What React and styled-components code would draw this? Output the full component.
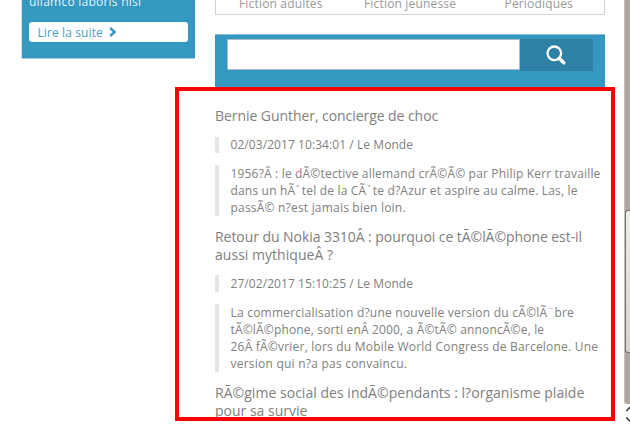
import React from "react";
import styled, { createGlobalStyle } from "styled-components";

const GlobalStyle = createGlobalStyle`
  * { box-sizing: border-box; }
  body { margin: 0; background: #fff; overflow: hidden; }
`;

const Page = styled.div`
  position: relative;
  display: flex;
  width: 630px;
  height: 429px;
  overflow: hidden;
  background: #fff;
  font-family: "Open Sans", sans-serif;
  color: #808080;
`;

const Sidebar = styled.aside`
  width: 173px;
  height: 59px;
  margin-left: 22px;
  padding: 0 7px;
  background: #3598c1;
  border-bottom: 1px solid #a5d0e3;
  box-shadow: -1px 0 0 #cfe5ef;
  flex: none;
`;

const Teaser = styled.p`
  margin: -7px 0 11px;
  height: 18px;
  line-height: 18px;
  font-size: 12px;
  letter-spacing: 0.24px;
  color: #e4f3fa;
  white-space: nowrap;
`;

const ReadMore = styled.a`
  display: flex;
  align-items: center;
  gap: 6px;
  width: 159px;
  height: 20px;
  padding-left: 8.4px;
  border-radius: 3px;
  background: #fff;
  color: #4a9fc6;
  font-size: 12px;
  letter-spacing: 0.12px;
  white-space: nowrap;
`;

const Main = styled.main`
  width: 390px;
  margin-left: 20px;
  flex: none;
`;

const Tabs = styled.nav`
  display: flex;
  height: 15px;
  padding-left: 23px;
  border: 1px solid #d2d2d2;
  border-top: 0;
`;

const Tab = styled.span`
  width: ${(p) => p.$w}px;
  flex: none;
  margin-top: -5px;
  line-height: 17px;
  font-size: 12px;
  letter-spacing: 0.17px;
  color: #999;
  white-space: nowrap;
`;

const Search = styled.form`
  display: flex;
  align-items: flex-start;
  height: 54px;
  margin: 19px 0 0;
  padding: 4px 12px 0;
  background: #3598c1;
  border-top: 1px solid #86c0da;
`;

const SearchInput = styled.input`
  width: 293px;
  height: 31px;
  margin: 0;
  padding: 0 8px;
  border: 1px solid #a9bcc5;
  border-radius: 0;
  background: #fff;
  outline: 0;
`;

const SearchButton = styled.button`
  display: flex;
  align-items: center;
  justify-content: center;
  width: 73px;
  height: 32px;
  margin: 0 0 0 -0.5px;
  padding: 0 1px 0 0;
  border: 0;
  background: #2d81a5;
`;

const News = styled.section`
  padding-top: 19px;
`;

const Title = styled.h3`
  margin: 0;
  font-weight: 400;
  font-size: 14px;
  line-height: ${(p) => p.$leading || 18.5}px;
`;

const Quote = styled.blockquote`
  display: flow-root;
  margin: ${(p) => p.$top}px 0 ${(p) => p.$bottom}px;
  padding: 0.9px 0 0 11.5px;
  border-left: 4px solid #e5e5e5;
  font-size: 12px;
  line-height: 16.9px;

  > :last-child {
    margin-bottom: -0.9px;
  }
`;

const Line = styled.span`
  display: block;
  width: max-content;
  white-space: pre;
  letter-spacing: ${(p) => p.$track || 0}px;
`;

const Accent = styled.span`
  margin: 0 2px 0 1px;
`;

const Highlight = styled.div`
  position: absolute;
  left: 175px;
  top: 87px;
  width: 440px;
  height: 334px;
  border: 4px solid #fe0000;
  pointer-events: none;
`;

const ScrollBar = styled.div`
  display: flex;
  flex-direction: column;
  width: 6px;
  margin-left: auto;
  flex: none;
`;

const Track = styled.div`
  height: 404px;
  padding-top: 210px;
  background: #aea5a0;
  border-left: 1px solid #c4beba;
  border-radius: 0 0 0 3px;
`;

const Thumb = styled.div`
  height: 143px;
  border: 1px solid #77716d;
  border-right: 0;
  border-radius: 3px 0 0 3px;
  background: linear-gradient(#ededeb, #d6d3cf);
`;

const Arrows = styled.svg`
  display: block;
`;

export default function App() {
  return (
    <Page>
      <GlobalStyle />
      <Sidebar>
        <Teaser>ullamco laboris nisi</Teaser>
        <ReadMore>
          Lire la suite
          <svg width="8" height="10" viewBox="0 0 8 10" fill="none" stroke="#3598c1" strokeWidth="2.4">
            <path d="M1.2 1 L5.6 5 L1.2 9" />
          </svg>
        </ReadMore>
      </Sidebar>
      <Main>
        <Tabs>
          <Tab $w={125}>Fiction adultes</Tab>
          <Tab $w={140.5}>Fiction jeunesse</Tab>
          <Tab $w={80}>Périodiques</Tab>
        </Tabs>
        <Search>
          <SearchInput />
          <SearchButton type="button">
            <svg width="20" height="20" viewBox="0 0 20 20" fill="none" stroke="#fff">
              <circle cx="8.3" cy="8.3" r="6.8" strokeWidth="2.3" />
              <path d="M13.3 13.3 L17.7 17.7" strokeWidth="3.4" strokeLinecap="round" />
            </svg>
          </SearchButton>
        </Search>
        <News>
          <Title><Line $track={-0.06}>Bernie Gunther, concierge de choc</Line></Title>
          <Quote $top={11} $bottom={11.6}><Line $track={0.07}>02/03/2017 10:34:01 / Le Monde</Line></Quote>
          <Quote $top={11.6} $bottom={12.3}>
            <Line $track={0.175}>1956?Â : le dÃ©tective allemand crÃ©Ã© par Philip Kerr travaille</Line>
            <Line $track={0.18}>dans un hÃ<Accent>´</Accent>tel de la CÃ<Accent>´</Accent>te d?Azur et aspire au calme. Las, le</Line>
            <Line $track={0.2}>passÃ© n?est jamais bien loin.</Line>
          </Quote>
          <Title $leading={18.3}>
            <Line $track={-0.06}>Retour du Nokia 3310Â : pourquoi ce tÃ©lÃ©phone est-il</Line>
            <Line $track={0.03}>aussi mythiqueÂ ?</Line>
          </Title>
          <Quote $top={10.8} $bottom={11.7}><Line $track={0.07}>27/02/2017 15:10:25 / Le Monde</Line></Quote>
          <Quote $top={11.7} $bottom={12}>
            <Line $track={0.22}>La commercialisation d?une nouvelle version du cÃ©lÃ¨bre</Line>
            <Line $track={0.16}>tÃ©lÃ©phone, sorti enÂ 2000, a Ã©tÃ© annoncÃ©e, le</Line>
            <Line $track={0.21}>26Â fÃ©vrier, lors du Mobile World Congress de Barcelone. Une</Line>
            <Line $track={0.23}>version qui n?a pas convaincu.</Line>
          </Quote>
          <Title>
            <Line $track={0.03}>RÃ©gime social des indÃ©pendants : l?organisme plaide</Line>
            <Line>pour sa survie</Line>
          </Title>
        </News>
      </Main>
      <ScrollBar>
        <Track><Thumb /></Track>
        <Arrows width="6" height="25" viewBox="0 0 6 25" fill="none" stroke="#333" strokeWidth="1.5">
          <path d="M2.3 7 L6 3.3 L9 6 M2.3 13.5 L6 17.2 L9 14" />
        </Arrows>
      </ScrollBar>
      <Highlight />
    </Page>
  );
}
